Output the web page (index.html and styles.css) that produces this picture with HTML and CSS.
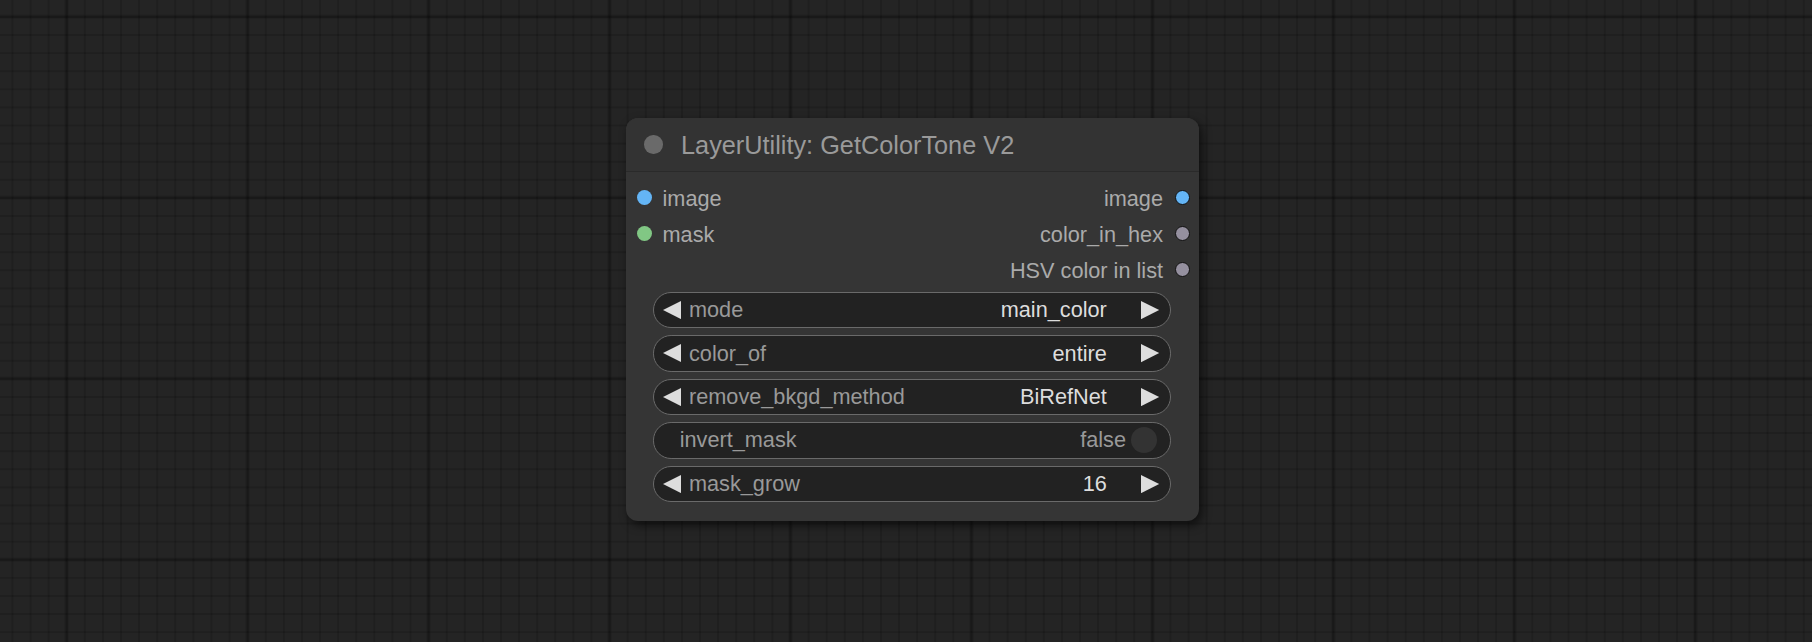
FILE: index.html
```html
<!DOCTYPE html>
<html lang="en">
<head>
<meta charset="utf-8">
<title>LayerUtility: GetColorTone V2</title>
<link rel="stylesheet" href="styles.css">
</head>
<body>
<div class="canvas">
  <div class="node">
    <div class="node-title">
      <span class="title-dot"></span>
      <span class="title-text">LayerUtility: GetColorTone V2</span>
    </div>
    <div class="node-body">
      <div class="slots">
        <div class="slot-row">
          <div class="slot slot-in"><span class="dot dot-image"></span><span class="slot-label">image</span></div>
          <div class="slot slot-out"><span class="slot-label">image</span><span class="dot dot-out dot-image"></span></div>
        </div>
        <div class="slot-row">
          <div class="slot slot-in"><span class="dot dot-mask"></span><span class="slot-label">mask</span></div>
          <div class="slot slot-out"><span class="slot-label">color_in_hex</span><span class="dot dot-out dot-any"></span></div>
        </div>
        <div class="slot-row">
          <div class="slot slot-in"></div>
          <div class="slot slot-out"><span class="slot-label">HSV color in list</span><span class="dot dot-out dot-any"></span></div>
        </div>
      </div>
      <div class="widgets">
        <div class="widget combo">
          <svg class="arrow arrow-left" viewBox="0 0 18 18"><polygon points="18,0 0,9 18,18"/></svg>
          <span class="w-label">mode</span>
          <span class="w-value">main_color</span>
          <svg class="arrow arrow-right" viewBox="0 0 18 18"><polygon points="0,0 18,9 0,18"/></svg>
        </div>
        <div class="widget combo">
          <svg class="arrow arrow-left" viewBox="0 0 18 18"><polygon points="18,0 0,9 18,18"/></svg>
          <span class="w-label">color_of</span>
          <span class="w-value">entire</span>
          <svg class="arrow arrow-right" viewBox="0 0 18 18"><polygon points="0,0 18,9 0,18"/></svg>
        </div>
        <div class="widget combo">
          <svg class="arrow arrow-left" viewBox="0 0 18 18"><polygon points="18,0 0,9 18,18"/></svg>
          <span class="w-label">remove_bkgd_method</span>
          <span class="w-value">BiRefNet</span>
          <svg class="arrow arrow-right" viewBox="0 0 18 18"><polygon points="0,0 18,9 0,18"/></svg>
        </div>
        <div class="widget toggle">
          <span class="w-label">invert_mask</span>
          <span class="t-value">false</span>
          <span class="t-knob"></span>
        </div>
        <div class="widget combo">
          <svg class="arrow arrow-left" viewBox="0 0 18 18"><polygon points="18,0 0,9 18,18"/></svg>
          <span class="w-label">mask_grow</span>
          <span class="w-value">16</span>
          <svg class="arrow arrow-right" viewBox="0 0 18 18"><polygon points="0,0 18,9 0,18"/></svg>
        </div>
      </div>
    </div>
  </div>
</div>
</body>
</html>
```

FILE: styles.css
```css
html, body {
  margin: 0;
  padding: 0;
}

body {
  width: 1812px;
  height: 642px;
  overflow: hidden;
  font-family: "Liberation Sans", Arial, sans-serif;
}

.canvas {
  position: relative;
  width: 1812px;
  height: 642px;
  background-color: #242424;
  background-image:
    linear-gradient(90deg, transparent 0, rgba(0,0,0,0.14) 0.5px, rgba(0,0,0,0.24) 2px, rgba(0,0,0,0.14) 3.5px, transparent 4px),
    linear-gradient(180deg, transparent 0, rgba(0,0,0,0.14) 0.5px, rgba(0,0,0,0.24) 2px, rgba(0,0,0,0.14) 3.5px, transparent 4px),
    linear-gradient(90deg, rgba(0,0,0,0.15) 0, rgba(0,0,0,0.15) 1.5px, transparent 1.5px),
    linear-gradient(180deg, rgba(0,0,0,0.15) 0, rgba(0,0,0,0.15) 1.5px, transparent 1.5px);
  background-size: 181px 181px, 181px 181px, 18.1px 18.1px, 18.1px 18.1px;
  background-position: 64.5px 0, 0 14.7px, 11.5px 0, 0 16px;
}

.node {
  position: absolute;
  left: 626px;
  top: 118px;
  width: 573px;
  background: #353535;
  border-radius: 12px;
  box-shadow: 3px 4px 10px rgba(0, 0, 0, 0.6);
}

.node-title {
  box-sizing: border-box;
  height: 54.3px;
  display: flex;
  align-items: center;
  background: #333333;
  border-radius: 12px 12px 0 0;
  border-bottom: 1.5px solid #2a2a2a;
}

.title-dot {
  width: 18.5px;
  height: 18.5px;
  border-radius: 50%;
  background: #6a6a6a;
  margin-left: 18px;
  flex: none;
}

.title-text {
  margin-left: 18.5px;
  font-size: 25.3px;
  line-height: 54.3px;
  color: #9a9a9a;
  white-space: nowrap;
}

.node-body {
  padding: 7.2px 0 19px 0;
}

.slots {
  display: flex;
  flex-direction: column;
}

.slot-row {
  height: 36.2px;
  display: flex;
  justify-content: space-between;
  align-items: center;
}

.slot {
  display: flex;
  align-items: center;
}

.slot-in {
  padding-left: 10.5px;
}

.slot-out {
  padding-right: 9px;
}

.slot-label {
  font-size: 21.7px;
  line-height: 24px;
  color: #aaaaaa;
  white-space: nowrap;
  margin-top: 3px;
}

.slot-in .slot-label {
  margin-left: 11px;
}

.slot-out .slot-label {
  margin-right: 12px;
}

.dot {
  display: block;
  width: 15px;
  height: 15px;
  border-radius: 50%;
  flex: none;
}

.dot-out {
  box-sizing: border-box;
  border: 1.6px solid #111111;
}

.dot-image {
  background: #64b5f6;
}

.dot-mask {
  background: #81c784;
}

.dot-any {
  background: #95909f;
}

.widgets {
  display: flex;
  flex-direction: column;
  gap: 7.3px;
  margin-top: 3.9px;
  padding: 0 28.5px 0 26.5px;
}

.widget {
  box-sizing: border-box;
  height: 36.2px;
  display: flex;
  align-items: center;
  background: #222222;
  border: 1.8px solid #6a6a6a;
  border-radius: 18.1px;
  font-size: 21.7px;
  white-space: nowrap;
}

.combo {
  padding: 0 10px 0 9.8px;
}

.arrow {
  width: 18.2px;
  height: 18.2px;
  flex: none;
  fill: #dddddd;
}

.w-label {
  color: #999999;
  line-height: 32px;
}

.combo .w-label {
  margin-left: 7.5px;
  flex: 1;
}

.w-value {
  color: #dddddd;
  line-height: 32px;
  margin-right: 34.5px;
}

.toggle {
  padding: 0 12.5px 0 26.2px;
}

.toggle .w-label {
  flex: 1;
}

.t-value {
  color: #999999;
  line-height: 32px;
  margin-right: 5px;
}

.t-knob {
  width: 26px;
  height: 26px;
  border-radius: 50%;
  background: #333333;
  flex: none;
}
```
